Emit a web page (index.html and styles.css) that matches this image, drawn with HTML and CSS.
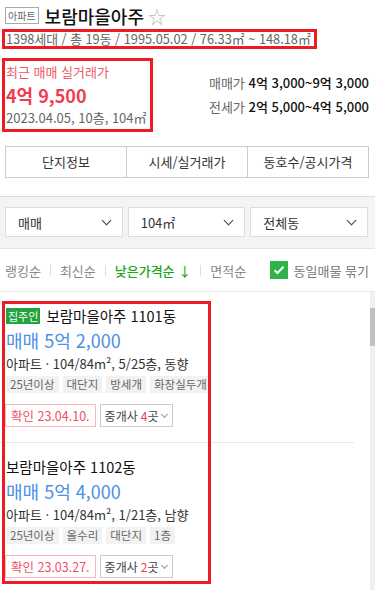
FILE: index.html
```html
<!DOCTYPE html>
<html lang="ko">
<head>
    <meta charset="UTF-8">
    <meta name="viewport" content="width=device-width, initial-scale=1.0">
    <title>보람마을아주</title>
    <link rel="stylesheet" href="styles.css">
</head>
<body>
    <div class="summary">
        <div class="title-row">
            <span class="type-tag">아파트</span>
            <h1 class="title">보람마을아주</h1>
            <span class="star">☆</span>
        </div>
        <div class="info-line mark">1398세대 / 총 19동 / 1995.05.02 / 76.33㎡ ~ 148.18㎡</div>
        <div class="price-row">
            <div class="recent mark">
                <div class="recent-label">최근 매매 실거래가</div>
                <div class="recent-price">4억 9,500</div>
                <div class="recent-date">2023.04.05, 10층, 104㎡</div>
            </div>
            <div class="ranges">
                <div><span class="range-label">매매가</span> <b>4억 3,000~9억 3,000</b></div>
                <div><span class="range-label">전세가</span> <b>2억 5,000~4억 5,000</b></div>
            </div>
        </div>
        <div class="tabs">
            <div class="tab">단지정보</div>
            <div class="tab">시세/실거래가</div>
            <div class="tab">동호수/공시가격</div>
        </div>
    </div>

    <div class="filters">
        <div class="select">매매<span class="chev"></span></div>
        <div class="select">104㎡<span class="chev"></span></div>
        <div class="select">전체동<span class="chev"></span></div>
    </div>

    <div class="sort-row">
        <div class="sorts">
            <span>랭킹순</span>
            <i class="sep"></i>
            <span>최신순</span>
            <i class="sep"></i>
            <span class="active">낮은가격순 ↓</span>
            <i class="sep"></i>
            <span>면적순</span>
        </div>
        <label class="group-check">
            <span class="checkbox">
                <svg width="12" height="10" viewBox="0 0 12 10"><path d="M1.5 5.2 4.5 8 10.5 1.8" fill="none" stroke="#fff" stroke-width="2"/></svg>
            </span>
            동일매물 묶기
        </label>
    </div>

    <div class="list-wrap">
        <div class="list">
            <div class="item">
                <div class="item-title"><span class="owner">집주인</span>보람마을아주 1101동</div>
                <div class="item-price">매매 5억 2,000</div>
                <div class="item-spec">아파트 · 104/84m², 5/25층, 동향</div>
                <div class="tags">
                    <span>25년이상</span><span>대단지</span><span>방세개</span><span>화장실두개</span>
                </div>
                <div class="actions">
                    <span class="confirm">확인 23.04.10.</span>
                    <span class="agents">중개사 <em>4</em>곳<span class="small-chev"></span></span>
                </div>
            </div>
            <div class="item">
                <div class="item-title">보람마을아주 1102동</div>
                <div class="item-price">매매 5억 4,000</div>
                <div class="item-spec">아파트 · 104/84m², 1/21층, 남향</div>
                <div class="tags">
                    <span>25년이상</span><span>올수리</span><span>대단지</span><span>1층</span>
                </div>
                <div class="actions">
                    <span class="confirm">확인 23.03.27.</span>
                    <span class="agents">중개사 <em>2</em>곳<span class="small-chev"></span></span>
                </div>
            </div>
            <div class="list-mark"></div>
        </div>
        <div class="scrollbar"><div class="thumb"></div></div>
    </div>
</body>
</html>
```

FILE: styles.css
```css
body {
    margin: 0;
    width: 375px;
    height: 590px;
    overflow: hidden;
    font-family: "Noto Sans CJK KR", "Noto Sans", sans-serif;
    color: #222;
    background-color: #fff;
}
.mark {
    border: 3px solid #ed1c24; /* red annotation boxes */
}
.summary {
    padding: 0 6px 0 2px;
}
.title-row {
    display: flex;
    align-items: center;
    height: 31px;
    padding-left: 3px;
}
.type-tag {
    border: 1px solid #aaa;
    color: #666;
    font-size: 10px;
    line-height: 15px;
    padding: 0 2px;
}
.title {
    margin: 0 0 0 6px;
    font-size: 18px;
    font-weight: 500;
    line-height: 24px;
    color: #111;
}
.star {
    margin-left: 4px;
    font-size: 18px;
    color: #bbb;
}
.info-line {
    width: fit-content;
    font-size: 12.8px;
    line-height: 14px;
    color: #666;
    padding: 0 3px 0 1px;
    margin-top: -2px;
}
.price-row {
    display: flex;
    justify-content: space-between;
    align-items: center;
    margin-top: 9px;
}
.recent {
    padding: 1px 3px 1px 1px;
}
.recent-label {
    font-size: 13px;
    line-height: 20px;
    color: #f0586a;
}
.recent-price {
    font-size: 18px;
    font-weight: bold;
    line-height: 26px;
    color: #f03c50;
}
.recent-date {
    font-size: 13px;
    line-height: 20px;
    color: #666;
}
.ranges {
    font-size: 13px;
    line-height: 24px;
    text-align: right;
    color: #111;
}
.ranges b {
    font-weight: 500;
}
.range-label {
    color: #666;
}
.tabs {
    display: flex;
    margin: 14px 0 0 3px;
    border: 1px solid #ccc;
}
.tab {
    flex: 1;
    text-align: center;
    font-size: 13px;
    line-height: 30px;
    color: #333;
}
.tab + .tab {
    border-left: 1px solid #ccc;
}
.filters {
    display: flex;
    gap: 5px;
    margin-top: 18px;
    padding: 10px 7px 11px 5px;
    background-color: #f4f4f4;
    border-top: 1px solid #ddd;
}
.select {
    flex: 1;
    display: flex;
    justify-content: space-between;
    align-items: center;
    height: 28px;
    padding: 0 12px 0 12px;
    background-color: #fff;
    border: 1px solid #ddd;
    font-size: 13px;
    color: #333;
}
.chev {
    width: 6px;
    height: 6px;
    border-right: 1.5px solid #444;
    border-bottom: 1.5px solid #444;
    transform: rotate(45deg);
    margin-top: -4px;
}
.sort-row {
    display: flex;
    justify-content: space-between;
    align-items: center;
    height: 42px;
    padding: 0 6px 0 5px;
    border-top: 1px solid #e2e2e2;
    border-bottom: 1px solid #e6e6e6;
    font-size: 13px;
    color: #888;
}
.sorts {
    display: flex;
    align-items: center;
    gap: 9px;
}
.sorts .active {
    color: #1aa81a;
    font-weight: 500;
}
.sep {
    width: 1px;
    height: 11px;
    background-color: #ddd;
}
.group-check {
    display: flex;
    align-items: center;
    gap: 6px;
    color: #777;
}
.checkbox {
    display: flex;
    align-items: center;
    justify-content: center;
    width: 18px;
    height: 18px;
    background-color: #2eb24a;
}
.list-wrap {
    display: flex;
    height: 300px;
}
.list {
    position: relative;
    flex: 1;
    padding-right: 16px;
}
.item {
    padding: 14px 0 15px 6px;
}
.item + .item {
    border-top: 1px solid #e8e8e8;
}
.item-title {
    display: flex;
    align-items: center;
    font-size: 14.5px;
    line-height: 20px;
    color: #111;
}
.owner {
    margin-right: 6px;
    padding: 0 2px;
    font-size: 11px;
    line-height: 16px;
    color: #fff;
    background-color: #22a33e;
}
.item-price {
    font-size: 18px;
    line-height: 28px;
    color: #4c8fe4;
}
.item-spec {
    font-size: 13px;
    line-height: 20px;
    color: #333;
}
.tags {
    display: flex;
    gap: 4px;
    margin-top: 2px;
}
.tags span {
    padding: 0 4px;
    font-size: 11.5px;
    line-height: 17px;
    color: #666;
    background-color: #f2f2f2;
}
.actions {
    display: flex;
    gap: 4px;
    margin: 11px 0 0 -1px;
}
.confirm, .agents {
    display: flex;
    align-items: center;
    height: 21px;
    font-size: 12.5px;
}
.confirm {
    padding: 0 5px;
    border: 1px solid #fbb6bf;
    color: #f0506a;
}
.agents {
    padding: 0 4px;
    font-size: 12px;
    border: 1px solid #ccc;
    color: #444;
}
.agents em {
    font-style: normal;
    color: #f03c50;
    margin-left: 3px;
}
.small-chev {
    width: 4px;
    height: 4px;
    margin: -3px 1px 0 4px;
    border-right: 1px solid #999;
    border-bottom: 1px solid #999;
    transform: rotate(45deg);
}
.list-mark {
    position: absolute;
    left: 2px;
    top: 9px;
    width: 203px;
    height: 277px;
    border: 3px solid #ed1c24;
    pointer-events: none;
}
.scrollbar {
    width: 5px;
    background-color: #f0f0f0;
}
.thumb {
    height: 38px;
    margin-top: 16px;
    background-color: #c1c1c1;
}
```
